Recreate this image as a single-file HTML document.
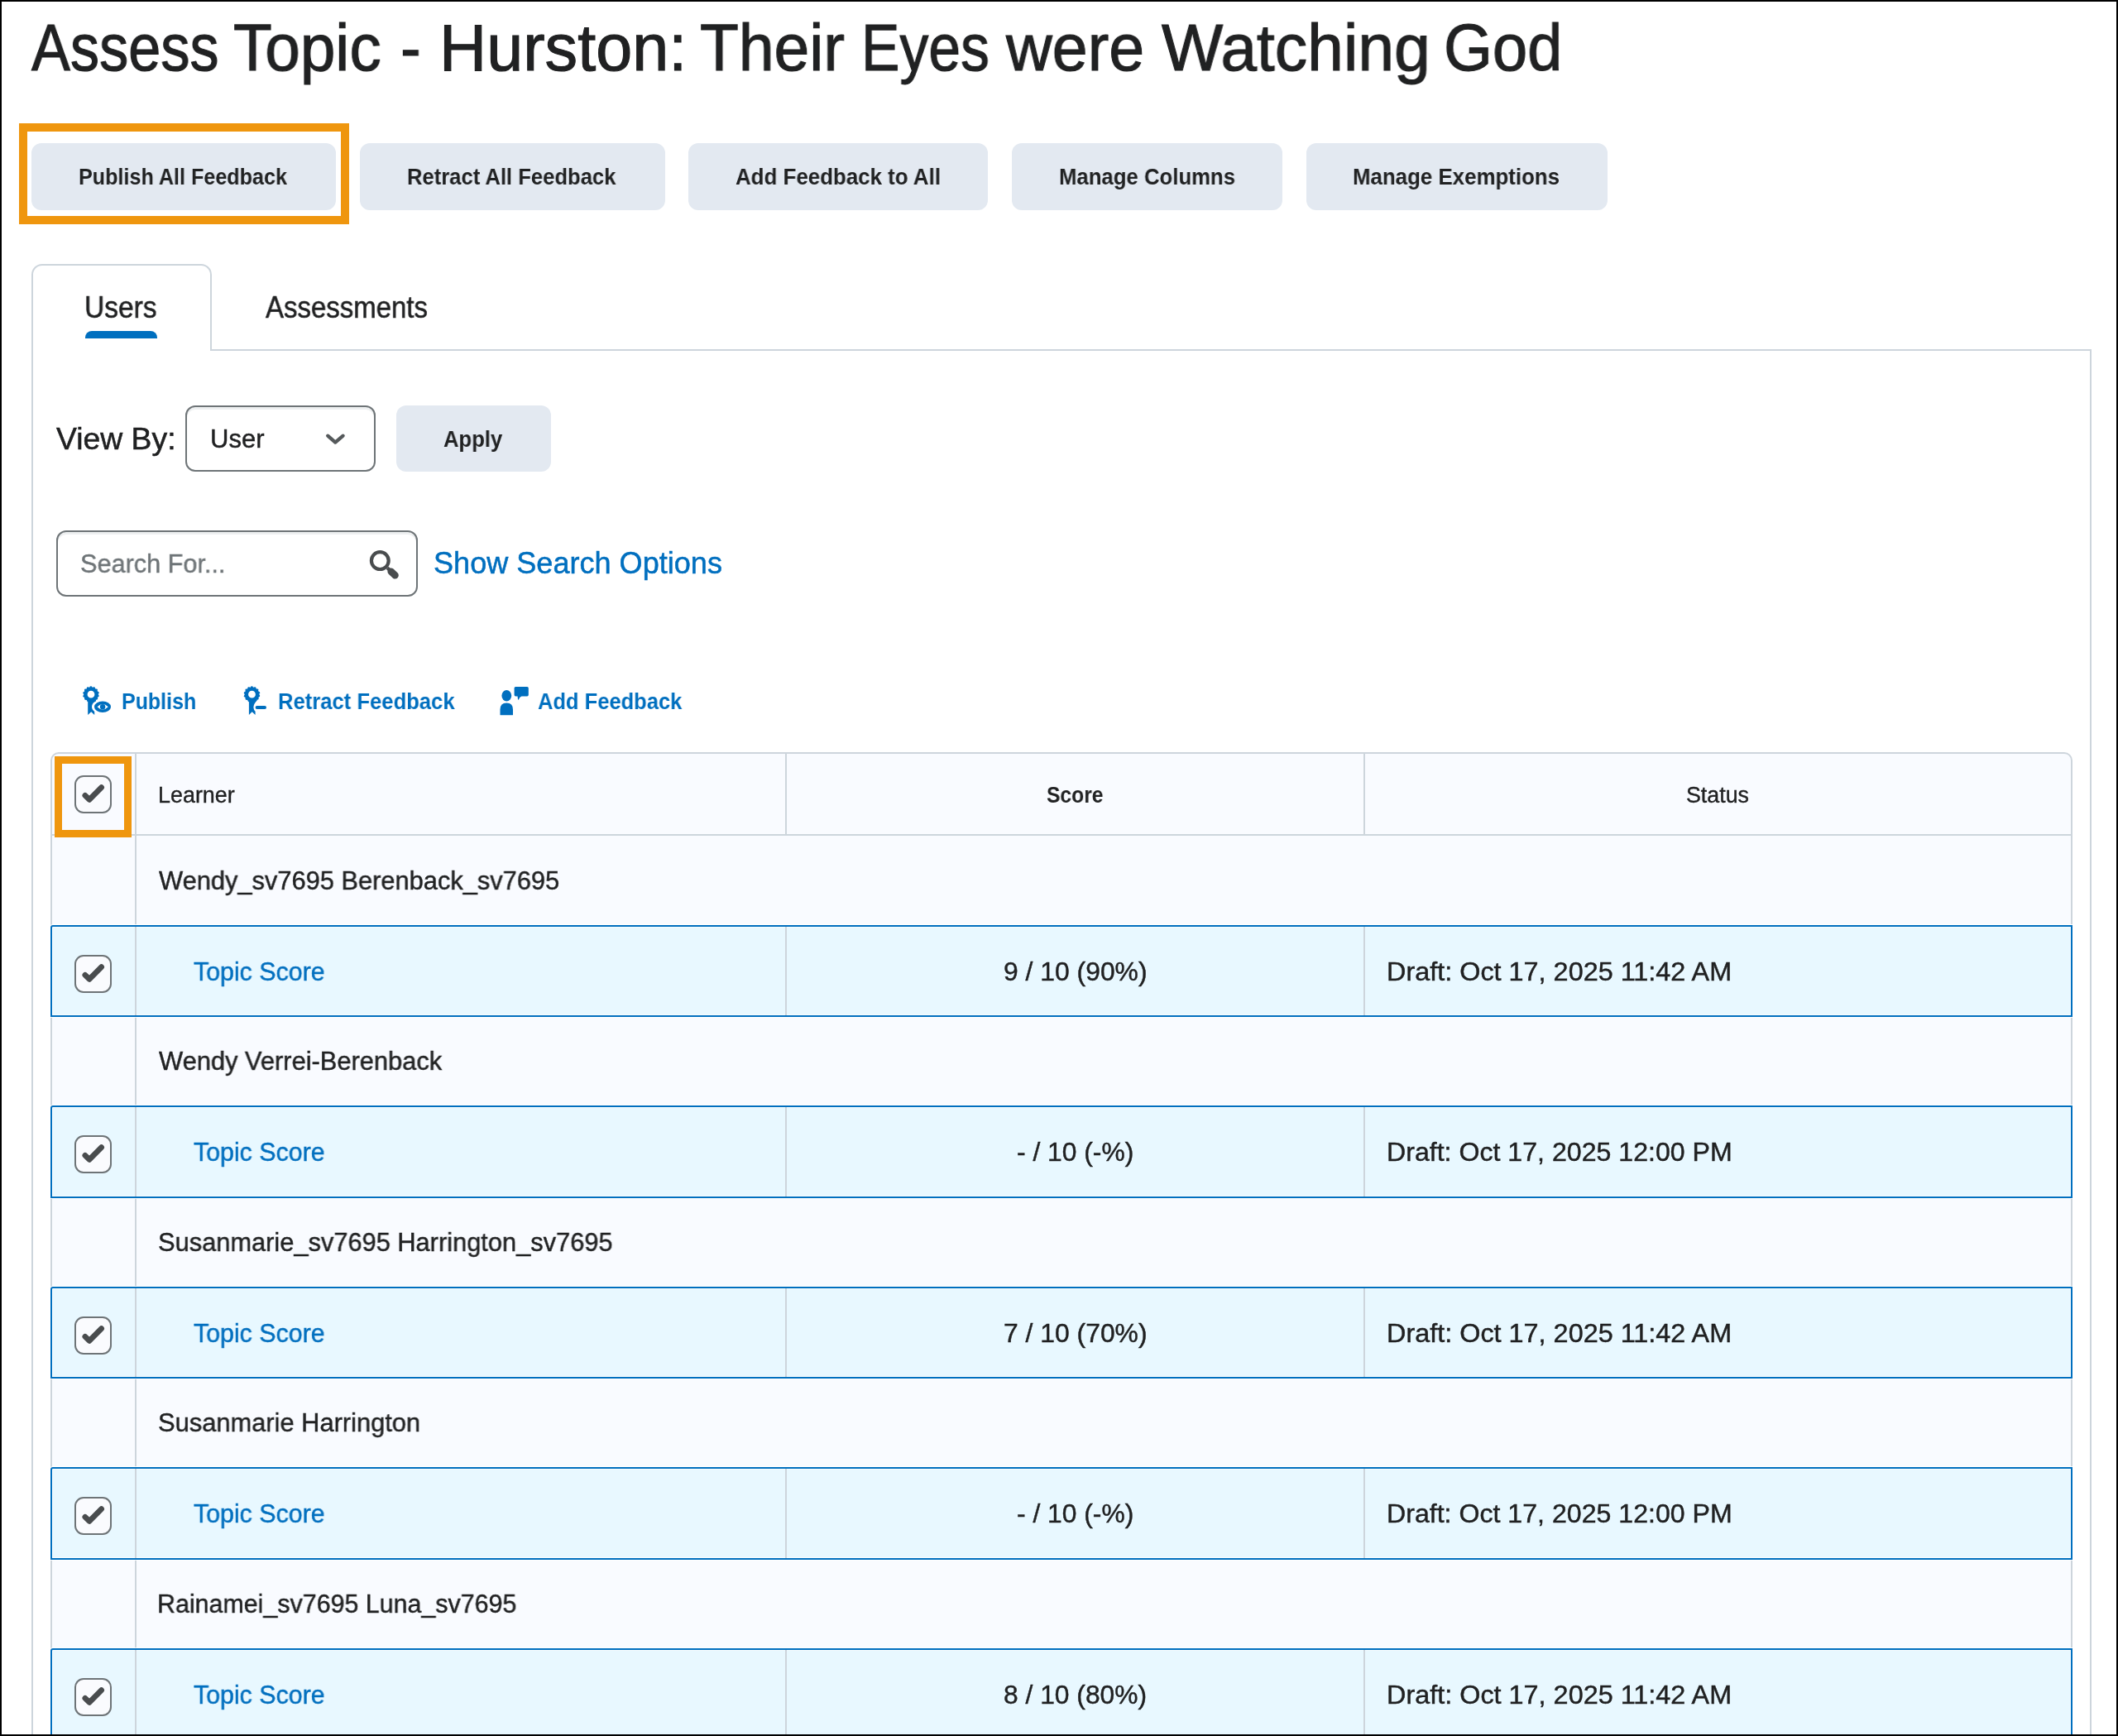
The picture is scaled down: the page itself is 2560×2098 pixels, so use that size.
<!DOCTYPE html>
<html lang="en"><head><meta charset="utf-8"><title>Assess Topic - Hurston: Their Eyes were Watching God</title>
<style>
html,body{margin:0;padding:0;overflow:hidden;}
body{width:2560px;height:2098px;position:relative;overflow:hidden;background:#fff;font-family:"Liberation Sans",sans-serif;color:#202122;}
*{box-sizing:border-box;}
.a{position:absolute;}
.t{position:absolute;margin:0;padding:0;white-space:nowrap;line-height:1;font-weight:400;transform-origin:0 50%;display:block;will-change:transform;}
.r{-webkit-text-stroke:0.014em currentColor;}
.btn{position:absolute;top:173px;height:80.5px;background:#e3e9f1;border-radius:12px;}
.inp{position:absolute;background:#fff;border:2px solid #6e7477;border-radius:12px;box-shadow:inset 0 3px 0 0 rgba(177,185,190,.22);}
.cb{position:absolute;left:90px;width:45.4px;height:46px;border:2px solid #6e7477;border-radius:11px;background:#fafbfe;}
.cb svg{position:absolute;left:-2px;top:-2px;}
.vl{position:absolute;width:2px;background:#cdd5dc;}
.hl{position:absolute;height:2px;background:#cdd5dc;}
.sel{position:absolute;left:61px;width:2444px;height:111.4px;background:#e8f8ff;border:2px solid #006fbf;border-radius:3px 0 0 0;box-shadow:0 0 0 1px rgba(255,255,255,.85),inset 0 0 0 1px rgba(255,255,255,.7);}
.or{position:absolute;border:10px solid #ef960e;}
</style></head><body>

<h1 style="margin:0;font-size:80px;font-weight:400"><span class="t r" style="left:37.50px;top:18.00px;font-size:79px;transform:scaleX(0.8895);">Assess</span> <span class="t r" style="left:282.30px;top:18.00px;font-size:79px;transform:scaleX(0.9684);">Topic</span> <span class="t r" style="left:483.98px;top:18.00px;font-size:79px;transform:scaleX(0.9388);">-</span> <span class="t r" style="left:531.01px;top:18.00px;font-size:79px;transform:scaleX(1.0023);">Hurston:</span> <span class="t r" style="left:845.80px;top:18.00px;font-size:79px;transform:scaleX(0.9710);">Their</span> <span class="t r" style="left:1041.16px;top:18.00px;font-size:79px;transform:scaleX(0.8815);">Eyes</span> <span class="t r" style="left:1216.11px;top:18.00px;font-size:79px;transform:scaleX(0.9766);">were</span> <span class="t r" style="left:1403.60px;top:18.00px;font-size:79px;transform:scaleX(0.9949);">Watching</span> <span class="t r" style="left:1745.15px;top:18.00px;font-size:79px;transform:scaleX(0.9590);">God</span></h1>
<div class="btn" style="left:37.6px;width:368.7px"></div><span class="t" style="left:95.43px;top:201.00px;font-size:26.8px;transform:scaleX(0.9382);font-weight:700;">Publish All Feedback</span>
<div class="btn" style="left:435.1px;width:369.0px"></div><span class="t" style="left:492.10px;top:201.00px;font-size:26.8px;transform:scaleX(0.9556);font-weight:700;">Retract All Feedback</span>
<div class="btn" style="left:832.1px;width:361.8px"></div><span class="t" style="left:889.10px;top:201.00px;font-size:26.8px;transform:scaleX(0.9663);font-weight:700;">Add Feedback to All</span>
<div class="btn" style="left:1223px;width:327.1px"></div><span class="t" style="left:1279.59px;top:201.00px;font-size:26.8px;transform:scaleX(0.9602);font-weight:700;">Manage Columns</span>
<div class="btn" style="left:1578.8px;width:364.2px"></div><span class="t" style="left:1635.38px;top:201.00px;font-size:26.8px;transform:scaleX(0.9650);font-weight:700;">Manage Exemptions</span>
<div class="or" style="left:23px;top:149px;width:399px;height:122px"></div>
<div class="a" style="left:38px;top:319px;width:218px;height:105px;border:2px solid #cdd5dc;border-bottom:0;border-radius:13px 13px 0 0;"></div>
<div class="a" style="left:38px;top:422px;width:2490px;height:1676px;border:2px solid #cdd5dc;border-top:0;"></div>
<div class="hl" style="left:254px;top:422px;width:2274px;background:#cdd5dc"></div>
<div class="a" style="left:103px;top:400px;width:87px;height:9px;background:#006fbf;border-radius:8px 8px 0 0;"></div>
<span class="t r" style="left:102.30px;top:354.00px;font-size:36px;transform:scaleX(0.9312);">Users</span>
<span class="t r" style="left:320.80px;top:354.00px;font-size:36px;transform:scaleX(0.9157);">Assessments</span>
<span class="t r" style="left:68.10px;top:513.00px;font-size:36px;transform:scaleX(1.0371);">View By:</span>
<div class="inp" style="left:224px;top:489.5px;width:229.6px;height:80.5px"></div>
<span class="t r" style="left:253.58px;top:515.00px;font-size:31px;transform:scaleX(0.9927);">User</span>
<svg class="a" style="left:385px;top:515px" width="40" height="30" viewBox="385 515 40 30"><path d="M396.2 526.7 L405.3 534.6 L414.6 526.7" fill="none" stroke="#55595b" stroke-width="4.3" stroke-linecap="round" stroke-linejoin="round"/></svg>
<div class="btn" style="left:479px;top:489.5px;width:187px;"></div>
<span class="t" style="left:536.20px;top:518.00px;font-size:26.8px;transform:scaleX(0.9569);font-weight:700;">Apply</span>
<div class="inp" style="left:68px;top:640.7px;width:437px;height:80px"></div>
<span class="t r" style="left:97.24px;top:666.00px;font-size:31px;transform:scaleX(0.9891);color:#6e7477;">Search For...</span>
<svg class="a" style="left:440px;top:660px" width="50" height="46" viewBox="440 660 50 46"><circle cx="459.3" cy="677.6" r="10.4" fill="none" stroke="#494c4e" stroke-width="4.2"/><path d="M468.2 686.4 L472.2 690" stroke="#494c4e" stroke-width="4.2" fill="none"/><path d="M472.6 690.6 L477.6 695.4" stroke="#494c4e" stroke-width="8.4" stroke-linecap="round" fill="none"/></svg>
<span class="t r" style="left:523.57px;top:663.00px;font-size:36px;transform:scaleX(1.0022);color:#006fbf;">Show Search Options</span>
<svg class="a" style="left:96px;top:826px" width="44" height="42" viewBox="96 826 44 42"><circle cx="110" cy="839.2" r="6.65" fill="none" stroke="#006fbf" stroke-width="4.5"/><circle cx="118.22" cy="840.95" r="1.45" fill="#006fbf"/><circle cx="116.64" cy="844.34" r="1.45" fill="#006fbf"/><circle cx="113.76" cy="846.71" r="1.45" fill="#006fbf"/><circle cx="110.13" cy="847.60" r="1.45" fill="#006fbf"/><circle cx="106.47" cy="846.82" r="1.45" fill="#006fbf"/><circle cx="103.51" cy="844.53" r="1.45" fill="#006fbf"/><circle cx="101.84" cy="841.19" r="1.45" fill="#006fbf"/><circle cx="101.78" cy="837.45" r="1.45" fill="#006fbf"/><circle cx="103.36" cy="834.06" r="1.45" fill="#006fbf"/><circle cx="106.24" cy="831.69" r="1.45" fill="#006fbf"/><circle cx="109.87" cy="830.80" r="1.45" fill="#006fbf"/><circle cx="113.53" cy="831.58" r="1.45" fill="#006fbf"/><circle cx="116.49" cy="833.87" r="1.45" fill="#006fbf"/><circle cx="118.16" cy="837.21" r="1.45" fill="#006fbf"/><path d="M106.2 846 L116 846 L116 852 L114.2 858 L114.2 864 L110.2 860.3 L106.2 864 Z" fill="#006fbf"/><ellipse cx="124" cy="854.2" rx="13" ry="8.6" fill="#fff"/><ellipse cx="124" cy="854.2" rx="10" ry="6.7" fill="#006fbf"/><path d="M117.6 854.2 Q124 847.6 130.8 854.2 Q124 860.8 117.6 854.2 Z" fill="#fff"/><circle cx="124.1" cy="854.2" r="3.2" fill="#006fbf"/></svg>
<span class="t" style="left:147.14px;top:833.00px;font-size:28.4px;transform:scaleX(0.8792);font-weight:700;color:#006fbf;">Publish</span>
<svg class="a" style="left:290px;top:826px" width="40" height="42" viewBox="290 826 40 42"><circle cx="304.5" cy="839.2" r="6.65" fill="none" stroke="#006fbf" stroke-width="4.5"/><circle cx="312.72" cy="840.95" r="1.45" fill="#006fbf"/><circle cx="311.14" cy="844.34" r="1.45" fill="#006fbf"/><circle cx="308.26" cy="846.71" r="1.45" fill="#006fbf"/><circle cx="304.63" cy="847.60" r="1.45" fill="#006fbf"/><circle cx="300.97" cy="846.82" r="1.45" fill="#006fbf"/><circle cx="298.01" cy="844.53" r="1.45" fill="#006fbf"/><circle cx="296.34" cy="841.19" r="1.45" fill="#006fbf"/><circle cx="296.28" cy="837.45" r="1.45" fill="#006fbf"/><circle cx="297.86" cy="834.06" r="1.45" fill="#006fbf"/><circle cx="300.74" cy="831.69" r="1.45" fill="#006fbf"/><circle cx="304.37" cy="830.80" r="1.45" fill="#006fbf"/><circle cx="308.03" cy="831.58" r="1.45" fill="#006fbf"/><circle cx="310.99" cy="833.87" r="1.45" fill="#006fbf"/><circle cx="312.66" cy="837.21" r="1.45" fill="#006fbf"/><path d="M300.9 846 L311 846 Q306.6 850.5 306.4 855 Q306.6 858.2 308.6 859.8 L308.6 864 L304.7 860.3 L300.9 864 Z" fill="#006fbf"/><path d="M310.6 855 L320 855" stroke="#006fbf" stroke-width="4" stroke-linecap="round"/></svg>
<span class="t" style="left:336.40px;top:833.00px;font-size:28.4px;transform:scaleX(0.9023);font-weight:700;color:#006fbf;">Retract Feedback</span>
<svg class="a" style="left:600px;top:826px" width="44" height="42" viewBox="600 826 44 42"><ellipse cx="612.3" cy="840.7" rx="5.9" ry="6.8" fill="#006fbf"/><path d="M604.5 864 L604.5 857.5 Q604.5 849.4 612.3 849.4 Q620 849.4 620 857.5 L620 864 Q620 864.2 619 864.2 L605.5 864.2 Q604.5 864.2 604.5 864 Z" fill="#006fbf"/><path d="M623.2 830 L637.2 830 Q638.8 830 638.8 831.6 L638.8 839.8 Q638.8 841.4 637.2 841.4 L630.4 841.4 Q627.6 842.6 627 845.4 Q626.6 846 626 845.2 L625.6 841.4 L623.2 841.4 Q621.6 841.4 621.6 839.8 L621.6 831.6 Q621.6 830 623.2 830 Z" fill="#006fbf"/></svg>
<span class="t" style="left:649.70px;top:833.00px;font-size:28.4px;transform:scaleX(0.8981);font-weight:700;color:#006fbf;">Add Feedback</span>
<div class="a" style="left:61px;top:909px;width:2444px;height:1189px;background:#f9fbff;border:2px solid #cdd5dc;border-radius:10px 10px 0 0;"></div>
<div class="hl" style="left:63px;top:1008px;width:2440px"></div>
<div class="cb" style="top:937px"><svg width="46" height="46" viewBox="0 0 46 46"><path d="M12.9 24.4 L18 29.3 L32.6 14.7" fill="none" stroke="#494c4e" stroke-width="6.8" stroke-linecap="round" stroke-linejoin="round"/></svg></div>
<span class="t r" style="left:190.90px;top:948.00px;font-size:26.8px;transform:scaleX(1.0039);">Learner</span>
<span class="t" style="left:1264.91px;top:948.00px;font-size:26.8px;transform:scaleX(0.9196);font-weight:700;">Score</span>
<span class="t r" style="left:2038.26px;top:948.00px;font-size:26.8px;transform:scaleX(1.0000);">Status</span>
<div class="vl" style="left:162.5px;top:911px;height:1187px"></div>
<div class="sel" style="top:1117.8px"></div>
<div class="sel" style="top:1336.3px"></div>
<div class="sel" style="top:1554.8px"></div>
<div class="sel" style="top:1773.3px"></div>
<div class="sel" style="top:1991.8px"></div>
<span class="t r" style="left:192.10px;top:1049.00px;font-size:31px;transform:scaleX(0.9938);">Wendy_sv7695 Berenback_sv7695</span>
<div class="cb" style="top:1153.6px"><svg width="46" height="46" viewBox="0 0 46 46"><path d="M12.9 24.4 L18 29.3 L32.6 14.7" fill="none" stroke="#494c4e" stroke-width="6.8" stroke-linecap="round" stroke-linejoin="round"/></svg></div>
<span class="t r" style="left:233.73px;top:1159.00px;font-size:31px;transform:scaleX(0.9786);color:#006fbf;">Topic Score</span>
<span class="t r" style="left:1212.91px;top:1159.00px;font-size:31px;transform:scaleX(1.0277);">9 / 10 (90%)</span>
<span class="t r" style="left:1675.87px;top:1159.00px;font-size:31px;transform:scaleX(1.0449);">Draft: Oct 17, 2025 11:42 AM</span>
<div class="vl" style="left:162.5px;top:1119.8px;height:107.4px"></div><div class="vl" style="left:949px;top:1119.8px;height:107.4px"></div><div class="vl" style="left:1647.5px;top:1119.8px;height:107.4px"></div>
<span class="t r" style="left:192.10px;top:1267.00px;font-size:31px;transform:scaleX(0.9947);">Wendy Verrei-Berenback</span>
<div class="cb" style="top:1372.1px"><svg width="46" height="46" viewBox="0 0 46 46"><path d="M12.9 24.4 L18 29.3 L32.6 14.7" fill="none" stroke="#494c4e" stroke-width="6.8" stroke-linecap="round" stroke-linejoin="round"/></svg></div>
<span class="t r" style="left:233.73px;top:1377.00px;font-size:31px;transform:scaleX(0.9786);color:#006fbf;">Topic Score</span>
<span class="t r" style="left:1229.41px;top:1377.00px;font-size:31px;transform:scaleX(1.0250);">- / 10 (-%)</span>
<span class="t r" style="left:1675.89px;top:1377.00px;font-size:31px;transform:scaleX(1.0361);">Draft: Oct 17, 2025 12:00 PM</span>
<div class="vl" style="left:162.5px;top:1338.3px;height:107.4px"></div><div class="vl" style="left:949px;top:1338.3px;height:107.4px"></div><div class="vl" style="left:1647.5px;top:1338.3px;height:107.4px"></div>
<span class="t r" style="left:191.14px;top:1486.00px;font-size:31px;transform:scaleX(0.9934);">Susanmarie_sv7695 Harrington_sv7695</span>
<div class="cb" style="top:1590.6px"><svg width="46" height="46" viewBox="0 0 46 46"><path d="M12.9 24.4 L18 29.3 L32.6 14.7" fill="none" stroke="#494c4e" stroke-width="6.8" stroke-linecap="round" stroke-linejoin="round"/></svg></div>
<span class="t r" style="left:233.73px;top:1596.00px;font-size:31px;transform:scaleX(0.9786);color:#006fbf;">Topic Score</span>
<span class="t r" style="left:1212.91px;top:1596.00px;font-size:31px;transform:scaleX(1.0277);">7 / 10 (70%)</span>
<span class="t r" style="left:1675.87px;top:1596.00px;font-size:31px;transform:scaleX(1.0449);">Draft: Oct 17, 2025 11:42 AM</span>
<div class="vl" style="left:162.5px;top:1556.8px;height:107.4px"></div><div class="vl" style="left:949px;top:1556.8px;height:107.4px"></div><div class="vl" style="left:1647.5px;top:1556.8px;height:107.4px"></div>
<span class="t r" style="left:191.14px;top:1704.00px;font-size:31px;transform:scaleX(0.9948);">Susanmarie Harrington</span>
<div class="cb" style="top:1809.1px"><svg width="46" height="46" viewBox="0 0 46 46"><path d="M12.9 24.4 L18 29.3 L32.6 14.7" fill="none" stroke="#494c4e" stroke-width="6.8" stroke-linecap="round" stroke-linejoin="round"/></svg></div>
<span class="t r" style="left:233.73px;top:1814.00px;font-size:31px;transform:scaleX(0.9786);color:#006fbf;">Topic Score</span>
<span class="t r" style="left:1229.41px;top:1814.00px;font-size:31px;transform:scaleX(1.0250);">- / 10 (-%)</span>
<span class="t r" style="left:1675.89px;top:1814.00px;font-size:31px;transform:scaleX(1.0361);">Draft: Oct 17, 2025 12:00 PM</span>
<div class="vl" style="left:162.5px;top:1775.3px;height:107.4px"></div><div class="vl" style="left:949px;top:1775.3px;height:107.4px"></div><div class="vl" style="left:1647.5px;top:1775.3px;height:107.4px"></div>
<span class="t r" style="left:189.73px;top:1923.00px;font-size:31px;transform:scaleX(0.9805);">Rainamei_sv7695 Luna_sv7695</span>
<div class="cb" style="top:2027.6px"><svg width="46" height="46" viewBox="0 0 46 46"><path d="M12.9 24.4 L18 29.3 L32.6 14.7" fill="none" stroke="#494c4e" stroke-width="6.8" stroke-linecap="round" stroke-linejoin="round"/></svg></div>
<span class="t r" style="left:233.73px;top:2033.00px;font-size:31px;transform:scaleX(0.9786);color:#006fbf;">Topic Score</span>
<span class="t r" style="left:1213.41px;top:2033.00px;font-size:31px;transform:scaleX(1.0247);">8 / 10 (80%)</span>
<span class="t r" style="left:1675.87px;top:2033.00px;font-size:31px;transform:scaleX(1.0449);">Draft: Oct 17, 2025 11:42 AM</span>
<div class="vl" style="left:162.5px;top:1993.8px;height:107.4px"></div><div class="vl" style="left:949px;top:1993.8px;height:107.4px"></div><div class="vl" style="left:1647.5px;top:1993.8px;height:107.4px"></div>
<div class="vl" style="left:949px;top:911px;height:97px"></div><div class="vl" style="left:1647.5px;top:911px;height:97px"></div>
<div class="or" style="left:66px;top:913.5px;width:93px;height:98.5px;border-width:9.5px"></div>
<div class="a" style="left:0;top:0;width:2560px;height:2098px;border:2px solid #000;"></div>
</body></html>
